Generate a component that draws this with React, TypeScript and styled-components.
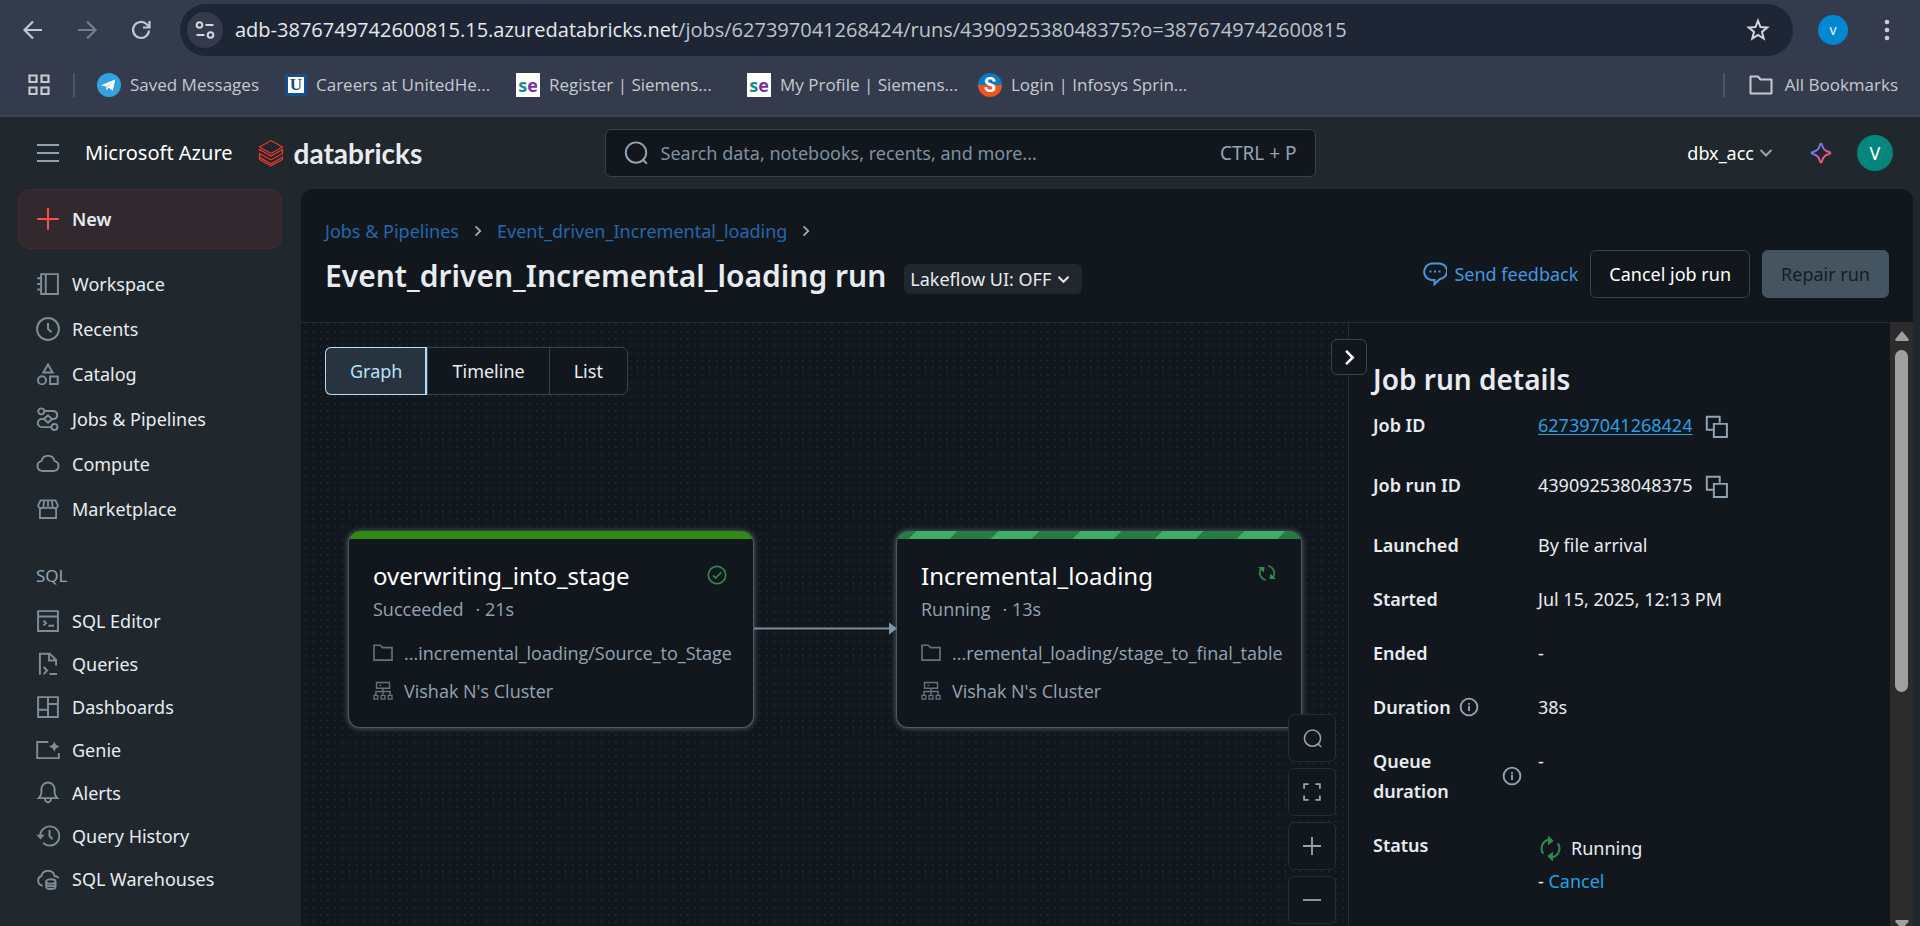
import React from 'react';
import styled, { createGlobalStyle, css } from 'styled-components';

const c = {
  chrome: '#343b4c',
  address: '#1e2636',
  shell: '#20272d',
  panel: '#12171d',
  line: '#262d34',
  border: '#37444f',
  text: '#e8ecf0',
  muted: '#92a4b3',
  icon: '#7d8e99',
  blue: '#4299e0',
};

const Global = createGlobalStyle`
  * { box-sizing: border-box; }
  body {
    margin: 0;
    background: ${c.shell};
    color: ${c.text};
    font-family: "Noto Sans", "Open Sans", sans-serif;
    font-size: 18px;
    line-height: 30px;
  }
  button, input { font: inherit; color: inherit; }
  button { padding: 0; border: 0; background: none; cursor: pointer; }
  a { color: inherit; text-decoration: none; }
  h1, h2, h3, p, ul, dl, dd, dt { margin: 0; padding: 0; }
  ul { list-style: none; }
  svg { display: block; flex: none; }
`;

/* ---------- icons ---------- */

type IconProps = { size?: number; box?: number; width?: number; children: React.ReactNode };
const Icon = ({ size = 24, box = 16, width = 1.3, children }: IconProps) => (
  <svg width={size} height={size} viewBox={`0 0 ${box} ${box}`} fill="none" stroke="currentColor" strokeWidth={width} aria-hidden="true">
    {children}
  </svg>
);

const WorkspaceIcon = () => (
  <Icon><path d="M3.4 1.4h11.2v13.2H3.4zM6.5 1.4v13.2M.8 4.2h3M.8 8h3M.8 11.7h3" /></Icon>
);
const ClockIcon = () => (
  <Icon><circle cx="8" cy="8" r="7.3" /><path d="M8 4v4l2.4 2.2" /></Icon>
);
const CatalogIcon = () => (
  <Icon><path d="M8 1.6 11.1 7H4.9zM9.4 9.6h5.1v5.1H9.4z" /><circle cx="4" cy="12.2" r="2.7" /></Icon>
);
const JobsIcon = () => (
  <Icon>
    <circle cx="3.5" cy="2.9" r="2" /><circle cx="12.3" cy="13.3" r="2" />
    <path d="M5.6 2.7h6.2a2.7 2.7 0 0 1 .3 5.3h-1.3M5.2 8H3.9a2.7 2.7 0 0 0 0 5.4h6.3M8 5.6 10.8 8 8 10.4 5.2 8z" />
  </Icon>
);
const CloudIcon = () => (
  <Icon><path d="M3.9 12.6a3.3 3.3 0 0 1-.3-6.5 4.5 4.5 0 0 1 8.8 0 3.3 3.3 0 0 1-.3 6.5z" /></Icon>
);
const MarketIcon = () => (
  <Icon width={1.2}>
    <path d="M3 2.2h10l1.6 3.6a2 2 0 0 1-3.5 1 2.1 2.1 0 0 1-3.1 0 2.1 2.1 0 0 1-3.1 0 2 2 0 0 1-3.5-1zM5.5 2.2 4.9 6.8M8 2.2v4.6M10.5 2.2l.6 4.6M2.6 7.9v6.1h10.8V7.9" />
  </Icon>
);
const EditorIcon = () => (
  <Icon><path d="M1.4 1.4h13.2v13.2H1.4zM1.4 5h13.2M5 7.8l1.7 1.6L5 11M8.3 11.2H12" /></Icon>
);
const QueriesIcon = () => (
  <Icon><path d="M2.6 15.2V1.1h6.6l4.2 4.2V9M8.7 1.2v4.4h4.6M5.1 10l2.3 2.3L5.1 14.7M9 14.6h5" /></Icon>
);
const DashboardIcon = () => (
  <Icon><path d="M1.4 1.4h13.2v13.2H1.4zM8 1.4v13.2M1.4 9.8H8M8 6h6.6" /></Icon>
);
const GenieIcon = () => (
  <Icon>
    <path d="M8.2 2.6H.8v10.8h14.4V10" />
    <path d="M12.2 2q.6 3.1 3.7 3.7-3.1.6-3.7 3.8-.6-3.2-3.7-3.8 3.1-.6 3.7-3.7z" fill="currentColor" stroke="none" />
  </Icon>
);
const BellIcon = () => (
  <Icon><path d="M1.8 11.4h12.4c-1.2-1.1-1.8-2-1.8-3.6V5.4a4.4 4.4 0 0 0-8.8 0v2.4c0 1.6-.6 2.5-1.8 3.6zM6 11.8a2 2.4 0 0 0 4 0" /></Icon>
);
const HistoryIcon = () => (
  <Icon>
    <path d="M2.8 7.4a6.4 6.4 0 1 1 1.9 5.2M9 4v4l2 2" />
    <path d="M.2 7.2h5.6L3 10.4z" fill="currentColor" stroke="none" />
  </Icon>
);
const WarehouseIcon = () => (
  <Icon>
    <path d="M4.4 12.3H4A3.3 3.3 0 0 1 3.6 6a4.5 4.5 0 0 1 8.8 0q1.8 0 2.7 1.5" />
    <ellipse cx="9.9" cy="9.6" rx="3.1" ry="1.5" />
    <path d="M6.8 9.6v3.6c0 2 6.2 2 6.2 0V9.6M6.8 11.5c0 1.8 6.2 1.8 6.2 0" />
  </Icon>
);
const SearchIcon = ({ size = 24 }: { size?: number }) => (
  <Icon size={size}><circle cx="8" cy="7.7" r="6.8" /><path d="m12.3 12.2 3 3" /></Icon>
);
const CopyIcon = () => (
  <Icon><path d="M5.2 9.8H1.2V1.2h8.6v4M5.9 5.9h8.7v8.7H5.9z" /></Icon>
);
const InfoIcon = () => (
  <Icon size={20} width={1.5}><circle cx="8" cy="8" r="6.7" /><path d="M8 7v4.2M8 4.8v1.4" /></Icon>
);
const SyncIcon = ({ size, turned }: { size: number; turned?: boolean }) => (
  <Icon size={size}>
    <g transform={turned ? 'rotate(45 8 8)' : undefined}>
      <path d="M7 13.6A5.8 5.8 0 0 1 3 5M9 2.4a5.8 5.8 0 0 1 4 8.6" />
      <path d="M.9 3.2h5.2L5.4 7.6zM15.1 12.8H9.9l.7-4.4z" fill="currentColor" stroke="none" />
    </g>
  </Icon>
);
const CheckCircleIcon = () => (
  <Icon width={1.1}><circle cx="8" cy="8" r="5.8" /><path d="m5.3 8.2 1.9 1.8 3.6-3.8" /></Icon>
);
const FolderIcon = () => (
  <Icon size={20}><path d="M.8 1.8h5l1.8 1.9h7.6v10H.8z" /></Icon>
);
const ClusterIcon = () => (
  <Icon size={20} width={1.1}>
    <path d="M2.8 1.2h10.4v4.6H2.8zM5.2 3.5h1.4M8 5.8v5M2.3 11V8.4h11.4V11M.8 11.5h3v3h-3zM6.5 11.5h3v3h-3zM12.2 11.5h3v3h-3z" />
  </Icon>
);
const Chevron = ({ size = 14, dir = 'down' }: { size?: number; dir?: 'down' | 'right' }) => (
  <Icon size={size} width={2.4}><path d={dir === 'down' ? 'm1.8 4.6 6.2 6.2 6.2-6.2' : 'm4.8 1.8 6.2 6.2-6.2 6.2'} /></Icon>
);

/* ---------- browser chrome ---------- */

const Page = styled.div`
  display: flex;
  flex-direction: column;
  height: 100vh;
  overflow: hidden;
`;
const Browser = styled.header`
  flex: none;
  background: ${c.chrome};
  border-bottom: 2px solid #3d4654;
  font-family: "Open Sans", "Noto Sans", sans-serif;
`;
const Toolbar = styled.div`
  display: flex;
  align-items: center;
  padding: 4px 21px;
`;
const NavButtons = styled.div`
  display: flex;
  gap: 30px;
  margin-right: 27px;
  color: #bcc8dc;
`;
const ChromeButton = styled.button<{ $dim?: boolean }>`
  ${(p) => p.$dim && css`color: #747b8a;`}
`;
const AddressBar = styled.div`
  flex: 1;
  display: flex;
  align-items: center;
  height: 52px;
  padding: 0 23px 0 7px;
  border-radius: 26px;
  background: ${c.address};
  color: #d3d6dc;
`;
const SiteInfo = styled.button`
  display: grid;
  place-items: center;
  width: 36px;
  height: 36px;
  margin-right: 12px;
  border-radius: 50%;
  background: ${c.chrome};
`;
const Url = styled.div`
  flex: 1;
  font-size: 20px;
  white-space: nowrap;
  overflow: hidden;
  color: #bfc3ca;
  b { font-weight: 400; color: #e6e8ec; }
`;
const Avatar = styled.button<{ $size: number; $color: string; $font: number }>`
  width: ${(p) => p.$size}px;
  height: ${(p) => p.$size}px;
  border-radius: 50%;
  background: ${(p) => p.$color};
  color: #fff;
  font-size: ${(p) => p.$font}px;
`;
const ChromeEnd = styled.div`
  display: flex;
  align-items: center;
  gap: 27px;
  margin-left: 25px;
`;
const Bookmarks = styled.nav`
  display: flex;
  align-items: center;
  gap: 26px;
  padding: 9px 22px 14px 27px;
  font-size: 17px;
  line-height: 32px;
  color: #c6c9cf;
`;
const BarDivider = styled.span`
  width: 2px;
  height: 24px;
  background: #4b5567;
`;
const AppsButton = styled.div`
  display: flex;
  align-items: center;
  gap: 22px;
  margin-right: -4px;
`;
const Bookmark = styled.a<{ $wide?: boolean }>`
  display: flex;
  align-items: center;
  gap: 9px;
  width: ${(p) => (p.$wide ? '205px' : 'auto')};
  white-space: nowrap;
`;
const AllBookmarks = styled.div`
  display: flex;
  align-items: center;
  gap: 24px;
  margin-left: auto;
  a { gap: 12px; }
`;
const Favicon = styled.span<{ $fg: string; $bg: string }>`
  flex: none;
  display: grid;
  grid-auto-flow: column;
  place-content: center;
  width: 24px;
  height: 24px;
  background: ${(p) => p.$bg};
  color: ${(p) => p.$fg};
  font-weight: 700;
  font-size: 18px;
  line-height: 20px;
  i { font-style: normal; color: #7a2f9c; }
`;
const UFavicon = styled(Favicon)`
  width: 22px;
  height: 22px;
  border: 3px solid #14508c;
  font-family: "Liberation Serif", serif;
  font-size: 17px;
  line-height: 16px;
`;
const SFavicon = styled(Favicon)`
  border-radius: 50%;
  font-family: Roboto, sans-serif;
  font-size: 20px;
`;

/* ---------- application header ---------- */

const AppHeader = styled.header`
  flex: none;
  display: grid;
  grid-template-columns: 1fr 711px 1fr;
  align-items: center;
  height: 72px;
  padding: 0 27px;
`;
const Brand = styled.div`
  display: flex;
  align-items: center;
  gap: 25px;
  padding-left: 9px;
  font-size: 20px;
  color: #fff;
  > button { color: ${c.muted}; }
`;
const Wordmark = styled.a`
  display: flex;
  align-items: center;
  gap: 10px;
  font-family: Lato, sans-serif;
  font-weight: 700;
  font-size: 28px;
  color: #e8ecf0;
`;
const SearchBox = styled.label`
  display: flex;
  align-items: center;
  gap: 11px;
  height: 48px;
  padding: 0 18px;
  border: 1px solid ${c.border};
  border-radius: 6px;
  background: ${c.panel};
  color: ${c.muted};
  input {
    flex: 1;
    min-width: 0;
    border: 0;
    outline: 0;
    background: none;
  }
  input::placeholder { color: #7f91a0; opacity: 1; }
  kbd { font: inherit; font-size: 19px; }
`;
const Account = styled.div`
  display: flex;
  align-items: center;
  justify-content: flex-end;
  gap: 36px;
  > button:last-child { margin-left: -12px; }
`;
const Workspace = styled.button`
  display: flex;
  align-items: center;
  gap: 5px;
  color: #fff;
  svg { color: ${c.muted}; }
`;

/* ---------- sidebar ---------- */

const Body = styled.div`
  flex: 1;
  min-height: 0;
  display: grid;
  grid-template-columns: 301px minmax(0, 1fr);
  padding-right: 7px;
`;
const Sidebar = styled.nav`
  padding: 0 19px 0 18px;
`;
const NewButton = styled.button`
  display: flex;
  align-items: center;
  gap: 12px;
  width: 100%;
  height: 60px;
  padding: 0 17px;
  border: 1px solid #4a2a31;
  border-radius: 12px;
  background: #32292e;
  font-weight: 600;
  svg { color: #ff4d4d; }
`;
const NavList = styled.ul<{ $row: number }>`
  a {
    display: flex;
    align-items: center;
    gap: 12px;
    height: ${(p) => p.$row}px;
    padding: 0 18px;
  }
  svg { color: ${c.icon}; }
`;
const MainList = styled(NavList)`margin-top: 12px;`;
const SectionName = styled.h2`
  margin: 30px 18px 8px;
  font-size: 17px;
  line-height: 30px;
  font-weight: 400;
  color: ${c.muted};
`;

/* ---------- main panel ---------- */

const Main = styled.main`
  display: flex;
  flex-direction: column;
  min-height: 0;
  border-radius: 12px 12px 0 0;
  background: ${c.panel};
  overflow: hidden;
`;
const RunHeader = styled.div`
  padding: 27px 24px 24px;
  border-bottom: 1px solid ${c.line};
`;
const Crumbs = styled.nav`
  display: flex;
  align-items: center;
  gap: 13px;
  margin-bottom: 4px;
  color: #2467ab;
  svg { color: #9aabb9; }
`;
const TitleRow = styled.div`
  display: flex;
  align-items: center;
  gap: 18px;
`;
const Title = styled.h1`
  padding-top: 4px;
  font-size: 30px;
  line-height: 40px;
  font-weight: 600;
`;
const UiSwitch = styled.button`
  display: flex;
  align-items: center;
  gap: 6px;
  height: 30px;
  margin-top: 10px;
  padding: 0 12px 0 6px;
  border-radius: 6px;
  background: #21272d;
`;
const Actions = styled.div`
  display: flex;
  align-items: center;
  gap: 12px;
  margin-left: auto;
`;
const Feedback = styled.a`
  display: flex;
  align-items: center;
  gap: 7px;
  color: ${c.blue};
`;
const Button = styled.button`
  height: 48px;
  padding: 0 18px;
  border: 1px solid ${c.border};
  border-radius: 6px;
  color: #fff;
  &:disabled {
    border-color: #445461;
    background: #445461;
    color: #161c22;
  }
`;
const Split = styled.div`
  flex: 1;
  min-height: 0;
  display: grid;
  grid-template-columns: minmax(0, 1fr) 565px;
`;

/* ---------- graph canvas ---------- */

const Canvas = styled.section`
  position: relative;
  padding: 24px;
  overflow: hidden;
`;
const Dots = styled.svg`
  position: absolute;
  inset: 0;
  width: 100%;
  height: 100%;
`;
const Tabs = styled.div`
  position: relative;
  display: inline-flex;
  border: 1px solid ${c.border};
  border-radius: 6px;
  background: ${c.panel};
`;
const Tab = styled.button<{ $on?: boolean }>`
  height: 46px;
  padding: 0 24px;
  border-left: 1px solid ${c.border};
  &:first-child { border-left: 0; }
  ${(p) => p.$on && css`
    margin: -1px 0 -1px -1px;
    padding: 0 25px;
    height: 48px;
    border-radius: 6px 0 0 6px;
    background: #273440;
    color: #b9e1f8;
    box-shadow: inset 0 0 0 1px #b3ddf5, inset -2px 0 0 #b3ddf5;
  `}
`;
const Node = styled.article<{ $x: number }>`
  position: absolute;
  left: ${(p) => p.$x}px;
  top: 208px;
  width: 406px;
  border: 1px solid #4d5b66;
  border-top: 0;
  border-radius: 12px;
  background: ${c.panel};
  box-shadow: 0 0 5px 1px #45525d;
  overflow: hidden;
`;
const NodeBar = styled.div<{ $running?: boolean }>`
  height: 8px;
  background: ${(p) =>
    p.$running
      ? 'repeating-linear-gradient(135deg, #277c43 0 14px, #3fae64 14px 43px, #277c43 43px 58px)'
      : '#318a12'};
`;
const NodeBody = styled.div`
  padding: 20px 24px 22px;
  font-family: "Open Sans", "Noto Sans", sans-serif;
  line-height: 28px;
  color: ${c.muted};
`;
const NodeHead = styled.div`
  display: flex;
  justify-content: space-between;
  color: #2f8a4c;
  h3 {
    font-family: "Noto Sans", "Open Sans", sans-serif;
    font-size: 24px;
    line-height: 33px;
    font-weight: 400;
    color: #fff;
  }
  svg { margin-top: 4px; }
`;
const NodeStatus = styled.p`
  display: flex;
  gap: 12px;
  margin-top: 3px;
`;
const NodeRow = styled.p<{ $gap: number }>`
  display: flex;
  align-items: center;
  gap: 11px;
  margin-top: ${(p) => p.$gap}px;
  svg { color: #65737e; }
`;
const NodePath = styled.span`
  flex: 1;
  display: flex;
  justify-content: flex-end;
  white-space: nowrap;
`;
const Edge = styled.svg`
  position: absolute;
  left: 453px;
  top: 299px;
`;
const Controls = styled.div`
  position: absolute;
  right: 12px;
  bottom: 2px;
  display: grid;
  gap: 6px;
`;
const Control = styled.button`
  display: grid;
  place-items: center;
  width: 48px;
  height: 48px;
  border: 1px solid ${c.line};
  border-radius: 6px;
  background: ${c.panel};
  color: ${c.muted};
`;

/* ---------- details panel ---------- */

const Details = styled.aside`
  position: relative;
  display: flex;
  min-height: 0;
  border-left: 1px solid ${c.line};
`;
const Collapse = styled.button`
  position: absolute;
  left: -18px;
  top: 16px;
  display: grid;
  place-items: center;
  width: 36px;
  height: 36px;
  border: 1px solid ${c.border};
  border-radius: 6px;
  background: ${c.panel};
  color: #fff;
`;
const DetailsBody = styled.div`
  flex: 1;
  padding: 36px 24px 0;
  overflow: hidden;
  h2 {
    font-size: 28px;
    line-height: 40px;
    font-weight: 600;
  }
`;
const Facts = styled.dl`
  display: grid;
  grid-template-columns: 149px 1fr;
  gap: 24px 16px;
  margin-top: 11px;
  dt {
    display: flex;
    align-items: center;
    align-self: start;
    gap: 8px;
    font-weight: 600;
  }
  dt svg { color: ${c.muted}; }
`;
const TermText = styled.span<{ $grow?: boolean }>`
  flex: ${(p) => (p.$grow ? 1 : 'none')};
`;
const IdValue = styled.dd`
  display: flex;
  gap: 13px;
  height: 36px;
  a { color: #2b9fe0; text-decoration: underline; text-underline-offset: 2px; }
  button { height: 34px; color: ${c.muted}; }
`;
const Running = styled.div`
  display: flex;
  align-items: center;
  gap: 8px;
  height: 36px;
  svg { color: #2f8a4c; }
`;
const Inline = styled.button`color: #2b9fe0;`;
const Scrollbar = styled.div`
  display: flex;
  flex-direction: column;
  align-items: center;
  gap: 9px;
  width: 23px;
  padding-top: 8px;
  background: #2c2c2c;
`;
const Track = styled.div`
  flex: 1;
  width: 13px;
`;
const Thumb = styled.div`
  height: 61%;
  border-radius: 7px;
  background: #9f9f9f;
`;

const mainLinks: [string, React.FC][] = [
  ['Workspace', WorkspaceIcon],
  ['Recents', ClockIcon],
  ['Catalog', CatalogIcon],
  ['Jobs & Pipelines', JobsIcon],
  ['Compute', CloudIcon],
  ['Marketplace', MarketIcon],
];
const sqlLinks: [string, React.FC][] = [
  ['SQL Editor', EditorIcon],
  ['Queries', QueriesIcon],
  ['Dashboards', DashboardIcon],
  ['Genie', GenieIcon],
  ['Alerts', BellIcon],
  ['Query History', HistoryIcon],
  ['SQL Warehouses', WarehouseIcon],
];

const links = (items: [string, React.FC][]) =>
  items.map(([name, Glyph]) => (
    <li key={name}><a href="#"><Glyph />{name}</a></li>
  ));

type TaskProps = { x: number; name: string; status: string; time: string; path: string; running?: boolean };
const Task = ({ x, name, status, time, path, running }: TaskProps) => (
  <Node $x={x}>
    <NodeBar $running={running} />
    <NodeBody>
      <NodeHead>
        <h3>{name}</h3>
        {running ? <SyncIcon size={20} /> : <CheckCircleIcon />}
      </NodeHead>
      <NodeStatus><span>{status}</span><span>· {time}</span></NodeStatus>
      <NodeRow $gap={16}><FolderIcon /><NodePath>{path}</NodePath></NodeRow>
      <NodeRow $gap={10}><ClusterIcon />Vishak N's Cluster</NodeRow>
    </NodeBody>
  </Node>
);

export default function App() {
  return (
    <Page>
      <Global />
      <Browser>
        <Toolbar>
          <NavButtons>
            <ChromeButton aria-label="Back"><Icon box={24} width={2.2}><path d="M21 12H4.5M12 3.5 3.5 12l8.5 8.5" /></Icon></ChromeButton>
            <ChromeButton aria-label="Forward" $dim><Icon box={24} width={2.2}><path d="M3 12h16.5M12 3.5l8.5 8.5-8.5 8.5" /></Icon></ChromeButton>
            <ChromeButton aria-label="Reload">
              <Icon box={24} width={2.2}><path d="M20 12.500a8 8 0 1 1-2.300-6.200l2.300 2.200M20.500 3v6.500h-6.500" /></Icon>
            </ChromeButton>
          </NavButtons>
          <AddressBar>
            <SiteInfo aria-label="View site information">
              <Icon size={20} box={20} width={2}><circle cx="4.5" cy="5" r="2.8" /><path d="M10.5 5h8M1.5 15h8" /><circle cx="15.5" cy="15" r="2.8" /></Icon>
            </SiteInfo>
            <Url><b>adb-3876749742600815.15.azuredatabricks.net</b>/jobs/627397041268424/runs/439092538048375?o=3876749742600815</Url>
            <ChromeButton aria-label="Bookmark this tab">
              <Icon box={24} width={2}><path d="m12 2.8 2.5 6.3 6.7.5-5.2 4.3 1.7 6.6-5.7-3.6-5.7 3.600L8 13.900 2.800 9.600l6.700-.5z" /></Icon>
            </ChromeButton>
          </AddressBar>
          <ChromeEnd>
            <Avatar $size={30} $color="#0288d1" $font={14}>v</Avatar>
            <ChromeButton aria-label="Menu">
              <svg width="24" height="24" fill="#c9cdd4"><circle cx="12" cy="4" r="2.3" /><circle cx="12" cy="12" r="2.3" /><circle cx="12" cy="20" r="2.3" /></svg>
            </ChromeButton>
          </ChromeEnd>
        </Toolbar>
        <Bookmarks aria-label="Bookmarks">
          <AppsButton>
            <ChromeButton aria-label="Apps"><Icon box={24} width={2.2}><path d="M2.5 2.5h7v6.5h-7zM14.5 2.5h7v6.5h-7zM2.5 14.5h7V21h-7zM14.5 14.5h7V21h-7z" /></Icon></ChromeButton>
            <BarDivider />
          </AppsButton>
          <Bookmark href="#">
            <svg width="24" height="24" viewBox="0 0 24 24">
              <circle cx="12" cy="12" r="12" fill="#34a3dd" />
              <path d="M4 12.2 18.2 6.6 15.8 17.8 11.7 14.8 9.6 16.9 9 13.6z" fill="#fff" />
              <path d="M9 13.6 15.5 9l-4.500 5.300-1.300 2.500z" fill="#c3dff0" />
            </svg>
            Saved Messages
          </Bookmark>
          <Bookmark href="#" $wide><UFavicon $fg="#14508c" $bg="#fff">U</UFavicon>Careers at UnitedHe...</Bookmark>
          <Bookmark href="#" $wide><Favicon $fg="#12908c" $bg="#fff">s<i>e</i></Favicon>Register | Siemens...</Bookmark>
          <Bookmark href="#" $wide><Favicon $fg="#12908c" $bg="#fff">s<i>e</i></Favicon>My Profile | Siemens...</Bookmark>
          <Bookmark href="#" $wide><SFavicon $fg="#fff" $bg="linear-gradient(#0a7ac4 52%, #f0531f 52%)">S</SFavicon>Login | Infosys Sprin...</Bookmark>
          <AllBookmarks>
            <BarDivider />
            <Bookmark href="#">
              <Icon box={24} width={2}><path d="M1.5 3.5H9l2.5 3h11v14h-21z" strokeLinejoin="round" /></Icon>
              All Bookmarks
            </Bookmark>
          </AllBookmarks>
        </Bookmarks>
      </Browser>

      <AppHeader>
        <Brand>
          <button aria-label="Toggle sidebar"><Icon box={24} width={2}><path d="M1 4h22M1 12h22M1 20h22" /></Icon></button>
          <a href="#">Microsoft Azure</a>
          <Wordmark href="#">
            <svg width="26" height="28" viewBox="0 0 26 28" fill="none" stroke="#f03a28" strokeWidth="1.2">
              <path d="M1.500 8 13 1.600 24.500 8 13 14.400z" />
              <path d="M1.500 12v-1.500L13 17l11.500-6.400v3.900L13 20.900 1.500 14.500v3.800L13 24.700l11.500-6.400" />
              <path d="M1.500 20.400 13 26.800l11.500-6.400v-2.800M1.500 20.400v-2.800" />
            </svg>
            databricks
          </Wordmark>
        </Brand>
        <SearchBox>
          <SearchIcon />
          <input type="text" aria-label="Search" placeholder="Search data, notebooks, recents, and more..." />
          <kbd>CTRL + P</kbd>
        </SearchBox>
        <Account>
          <Workspace>dbx_acc<Chevron /></Workspace>
          <button aria-label="Assistant">
            <svg width="24" height="24" viewBox="0 0 24 24" fill="none" stroke="url(#spark)" strokeWidth="2" strokeLinejoin="round">
              <defs>
                <linearGradient id="spark" x1="0" y1="0" x2="1" y2="1">
                  <stop offset="20%" stopColor="#4a8df0" /><stop offset="50%" stopColor="#c44fd0" /><stop offset="80%" stopColor="#ff5a4d" />
                </linearGradient>
              </defs>
              <path d="M12 2.5c.8 0 1 1 1.3 2.2 1 3.6 2.4 5 6 6 1.2.3 2.2.5 2.2 1.3s-1 1-2.2 1.3c-3.6 1-5 2.4-6 6-.3 1.2-.5 2.2-1.3 2.2s-1-1-1.3-2.2c-1-3.6-2.4-5-6-6C3.500 13 2.500 12.800 2.500 12s1-1 2.200-1.300c3.600-1 5-2.400 6-6C11 3.500 11.200 2.500 12 2.500z" />
            </svg>
          </button>
          <Avatar $size={36} $color="#04867d" $font={18}>V</Avatar>
        </Account>
      </AppHeader>

      <Body>
        <Sidebar>
          <NewButton><Icon width={1.4}><path d="M8 .8v14.4M.8 8h14.4" /></Icon>New</NewButton>
          <MainList $row={45}>{links(mainLinks)}</MainList>
          <SectionName>SQL</SectionName>
          <NavList $row={43}>{links(sqlLinks)}</NavList>
        </Sidebar>

        <Main>
          <RunHeader>
            <Crumbs aria-label="Breadcrumb">
              <a href="#">Jobs & Pipelines</a><Chevron size={12} dir="right" />
              <a href="#">Event_driven_Incremental_loading</a><Chevron size={12} dir="right" />
            </Crumbs>
            <TitleRow>
              <Title>Event_driven_Incremental_loading run</Title>
              <UiSwitch>Lakeflow UI: OFF<Chevron size={13} /></UiSwitch>
              <Actions>
                <Feedback href="#">
                  <Icon box={24} width={2}>
                    <path d="M8.5 1.5h7a7.5 7.5 0 0 1 1.5 15.500l-1.500 1.200-4 4V18H8.500a8.300 8.300 0 0 1 0-16.500z" />
                    <path d="M6.5 9.5h2M11 9.500h2M15.500 9.500h2" />
                  </Icon>
                  Send feedback
                </Feedback>
                <Button>Cancel job run</Button>
                <Button disabled>Repair run</Button>
              </Actions>
            </TitleRow>
          </RunHeader>

          <Split>
            <Canvas>
              <Dots aria-hidden="true">
                <defs>
                  <pattern id="dots" width="7.2" height="7.2" patternUnits="userSpaceOnUse">
                    <circle cx="5.2" cy="1.4" r=".8" fill="#2a3038" />
                  </pattern>
                </defs>
                <rect width="100%" height="100%" fill="url(#dots)" />
              </Dots>
              <Tabs>
                <Tab $on aria-pressed="true">Graph</Tab>
                <Tab>Timeline</Tab>
                <Tab>List</Tab>
              </Tabs>
              <Task x={47} name="overwriting_into_stage" status="Succeeded" time="21s" path="...incremental_loading/Source_to_Stage" />
              <Task x={595} name="Incremental_loading" status="Running" time="13s" path="...remental_loading/stage_to_final_table" running />
              <Edge width="143" height="14" aria-hidden="true">
                <path d="M0 6.5h136" stroke="#7d8e9c" strokeWidth="2" />
                <path d="M135 .5l8 6-8 6z" fill="#8496a5" />
              </Edge>
              <Controls>
                <Control aria-label="Search graph"><SearchIcon size={19} /></Control>
                <Control aria-label="Fit view"><Icon size={18} width={1.6}><path d="M1 5V1h4M11 1h4v4M15 11v4h-4M5 15H1v-4" /></Icon></Control>
                <Control aria-label="Zoom in"><Icon size={18} width={1.6}><path d="M8 0v16M0 8h16" /></Icon></Control>
                <Control aria-label="Zoom out"><Icon size={18} width={1.6}><path d="M0 8h16" /></Icon></Control>
              </Controls>
            </Canvas>

            <Details>
              <DetailsBody>
                <h2>Job run details</h2>
                <Facts>
                  <dt>Job ID</dt>
                  <IdValue><a href="#">627397041268424</a><button aria-label="Copy job ID"><CopyIcon /></button></IdValue>
                  <dt>Job run ID</dt>
                  <IdValue><span>439092538048375</span><button aria-label="Copy job run ID"><CopyIcon /></button></IdValue>
                  <dt>Launched</dt>
                  <dd>By file arrival</dd>
                  <dt>Started</dt>
                  <dd>Jul 15, 2025, 12:13 PM</dd>
                  <dt>Ended</dt>
                  <dd>-</dd>
                  <dt><TermText>Duration</TermText><InfoIcon /></dt>
                  <dd>38s</dd>
                  <dt><TermText $grow>Queue duration</TermText><InfoIcon /></dt>
                  <dd>-</dd>
                  <dt>Status</dt>
                  <dd>
                    <Running><SyncIcon size={25} turned />Running</Running>
                    - <Inline>Cancel</Inline>
                  </dd>
                </Facts>
              </DetailsBody>
              <Scrollbar aria-hidden="true">
                <svg width="14" height="10"><path d="M7 0 14 8.5 13 10H1L0 8.5z" fill="#9f9f9f" /></svg>
                <Track><Thumb /></Track>
                <svg width="14" height="6"><path d="M1 0h12l1 1.5L9.7 6H4.3L0 1.5z" fill="#9f9f9f" /></svg>
              </Scrollbar>
              <Collapse aria-label="Hide details"><Chevron size={17} dir="right" /></Collapse>
            </Details>
          </Split>
        </Main>
      </Body>
    </Page>
  );
}
